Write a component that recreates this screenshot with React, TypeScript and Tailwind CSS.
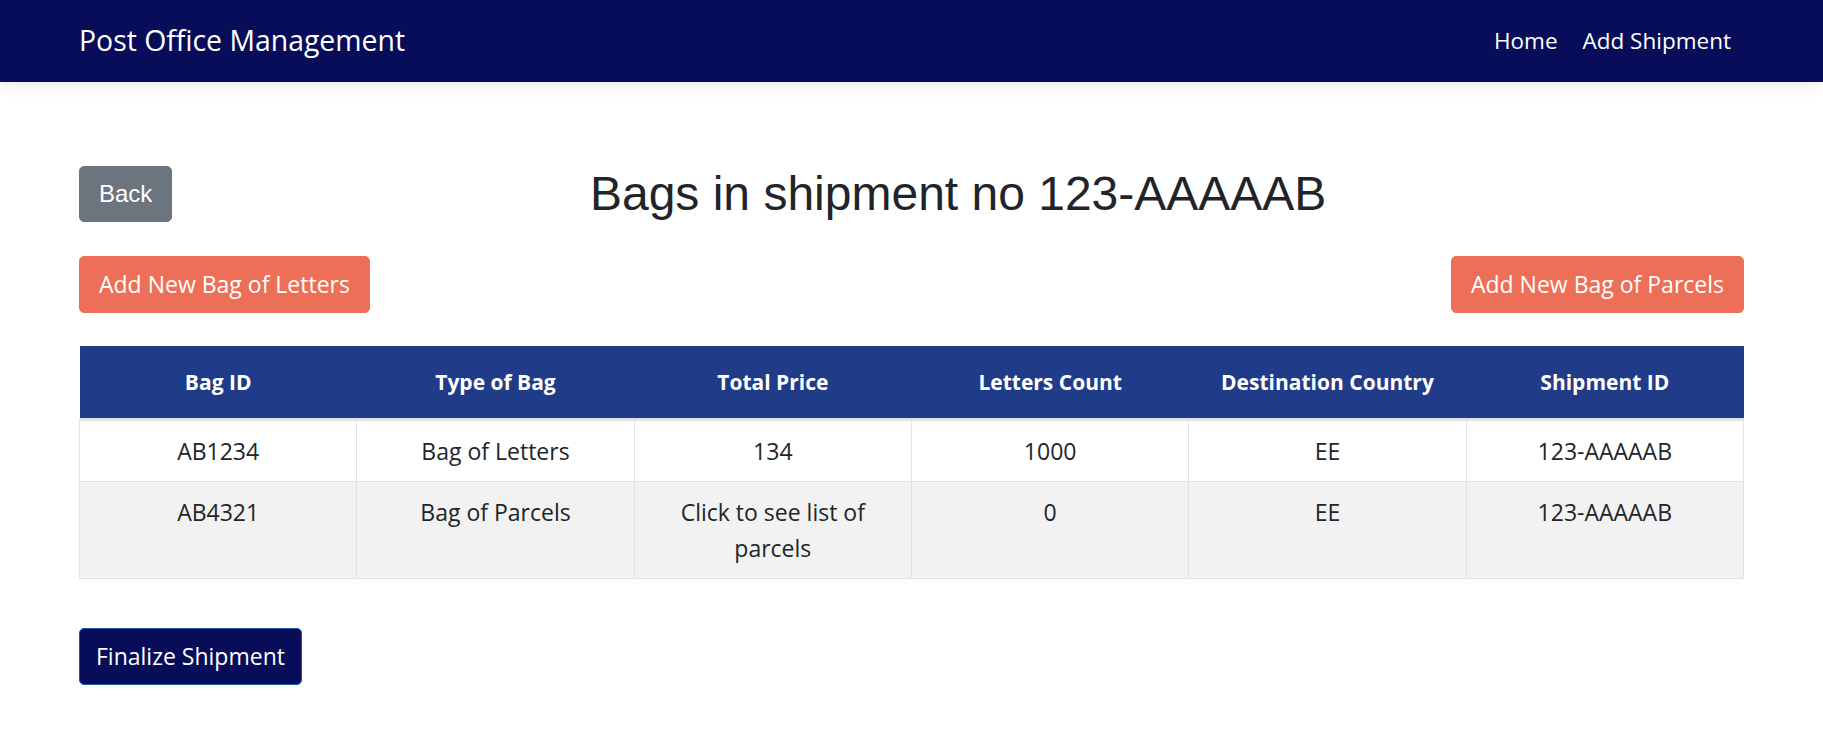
const rows = [
  { id: 'AB1234', type: 'Bag of Letters', price: '134', count: '1000', country: 'EE', shipment: '123-AAAAAB' },
  { id: 'AB4321', type: 'Bag of Parcels', price: 'Click to see list of parcels', count: '0', country: 'EE', shipment: '123-AAAAAB' },
]

const headers = ['Bag ID', 'Type of Bag', 'Total Price', 'Letters Count', 'Destination Country', 'Shipment ID']

export default function App() {
  return (
    <div className="min-h-screen bg-white font-['Open_Sans',sans-serif]">
      <nav className="relative z-10 h-[82px] bg-[#070d59] px-[79px] flex items-center justify-between shadow-[0_4px_14px_rgba(0,0,0,0.08)]">
        <span className="text-white text-[28.4px] leading-none -mt-[2px]">Post Office Management</span>
        <div className="flex items-center gap-[25px] pr-[13px] text-white text-[22.5px]">
          <a href="#">Home</a>
          <a href="#">Add Shipment</a>
        </div>
      </nav>

      <main className="px-[79px] pt-[84px]">
        <div className="flex items-center">
          <button className="bg-[#6c757d] border border-[#6c757d] text-white rounded-[5px] px-[19px] py-[9px] text-[24px] leading-[36px] font-['Liberation_Sans',Arial,sans-serif]">
            Back
          </button>
          <h1 className="flex-1 text-center text-[48px] leading-[56px] text-[#212529] font-['Liberation_Sans',Arial,sans-serif]">
            Bags in shipment no 123-AAAAAB
          </h1>
        </div>

        <div className="flex justify-between mt-[34px]">
          <button className="bg-[#ee6f57] border border-[#ee6f57] text-white rounded-[5px] px-[19px] py-[11px] text-[23px] leading-[33px]">
            Add New Bag of Letters
          </button>
          <button className="bg-[#ee6f57] border border-[#ee6f57] text-white rounded-[5px] px-[19px] py-[11px] text-[23px] leading-[33px]">
            Add New Bag of Parcels
          </button>
        </div>

        <table className="w-full table-fixed border-collapse mt-[33px] text-[#212529] text-[23px] leading-[36px]">
          <thead>
            <tr className="bg-[#203b88]">
              {headers.map((h) => (
                <th key={h} className="py-[18px] px-3 text-white font-bold text-[21px] border-b-[3px] border-[#dee2e6]">
                  {h}
                </th>
              ))}
            </tr>
          </thead>
          <tbody>
            {rows.map((r, i) => (
              <tr key={r.id} className={i % 2 === 1 ? 'bg-[#f2f2f2]' : 'bg-white'}>
                {[r.id, r.type, r.price, r.count, r.country, r.shipment].map((v, j) => (
                  <td key={j} className="border border-[#dee2e6] px-3 py-3 text-center align-top">
                    {v}
                  </td>
                ))}
              </tr>
            ))}
          </tbody>
        </table>

        <button className="mt-[49px] bg-[#070d59] border border-[#1e5ba8] text-white rounded-[5px] px-[16px] py-[11px] text-[23px] leading-[33px]">
          Finalize Shipment
        </button>
      </main>
    </div>
  )
}
